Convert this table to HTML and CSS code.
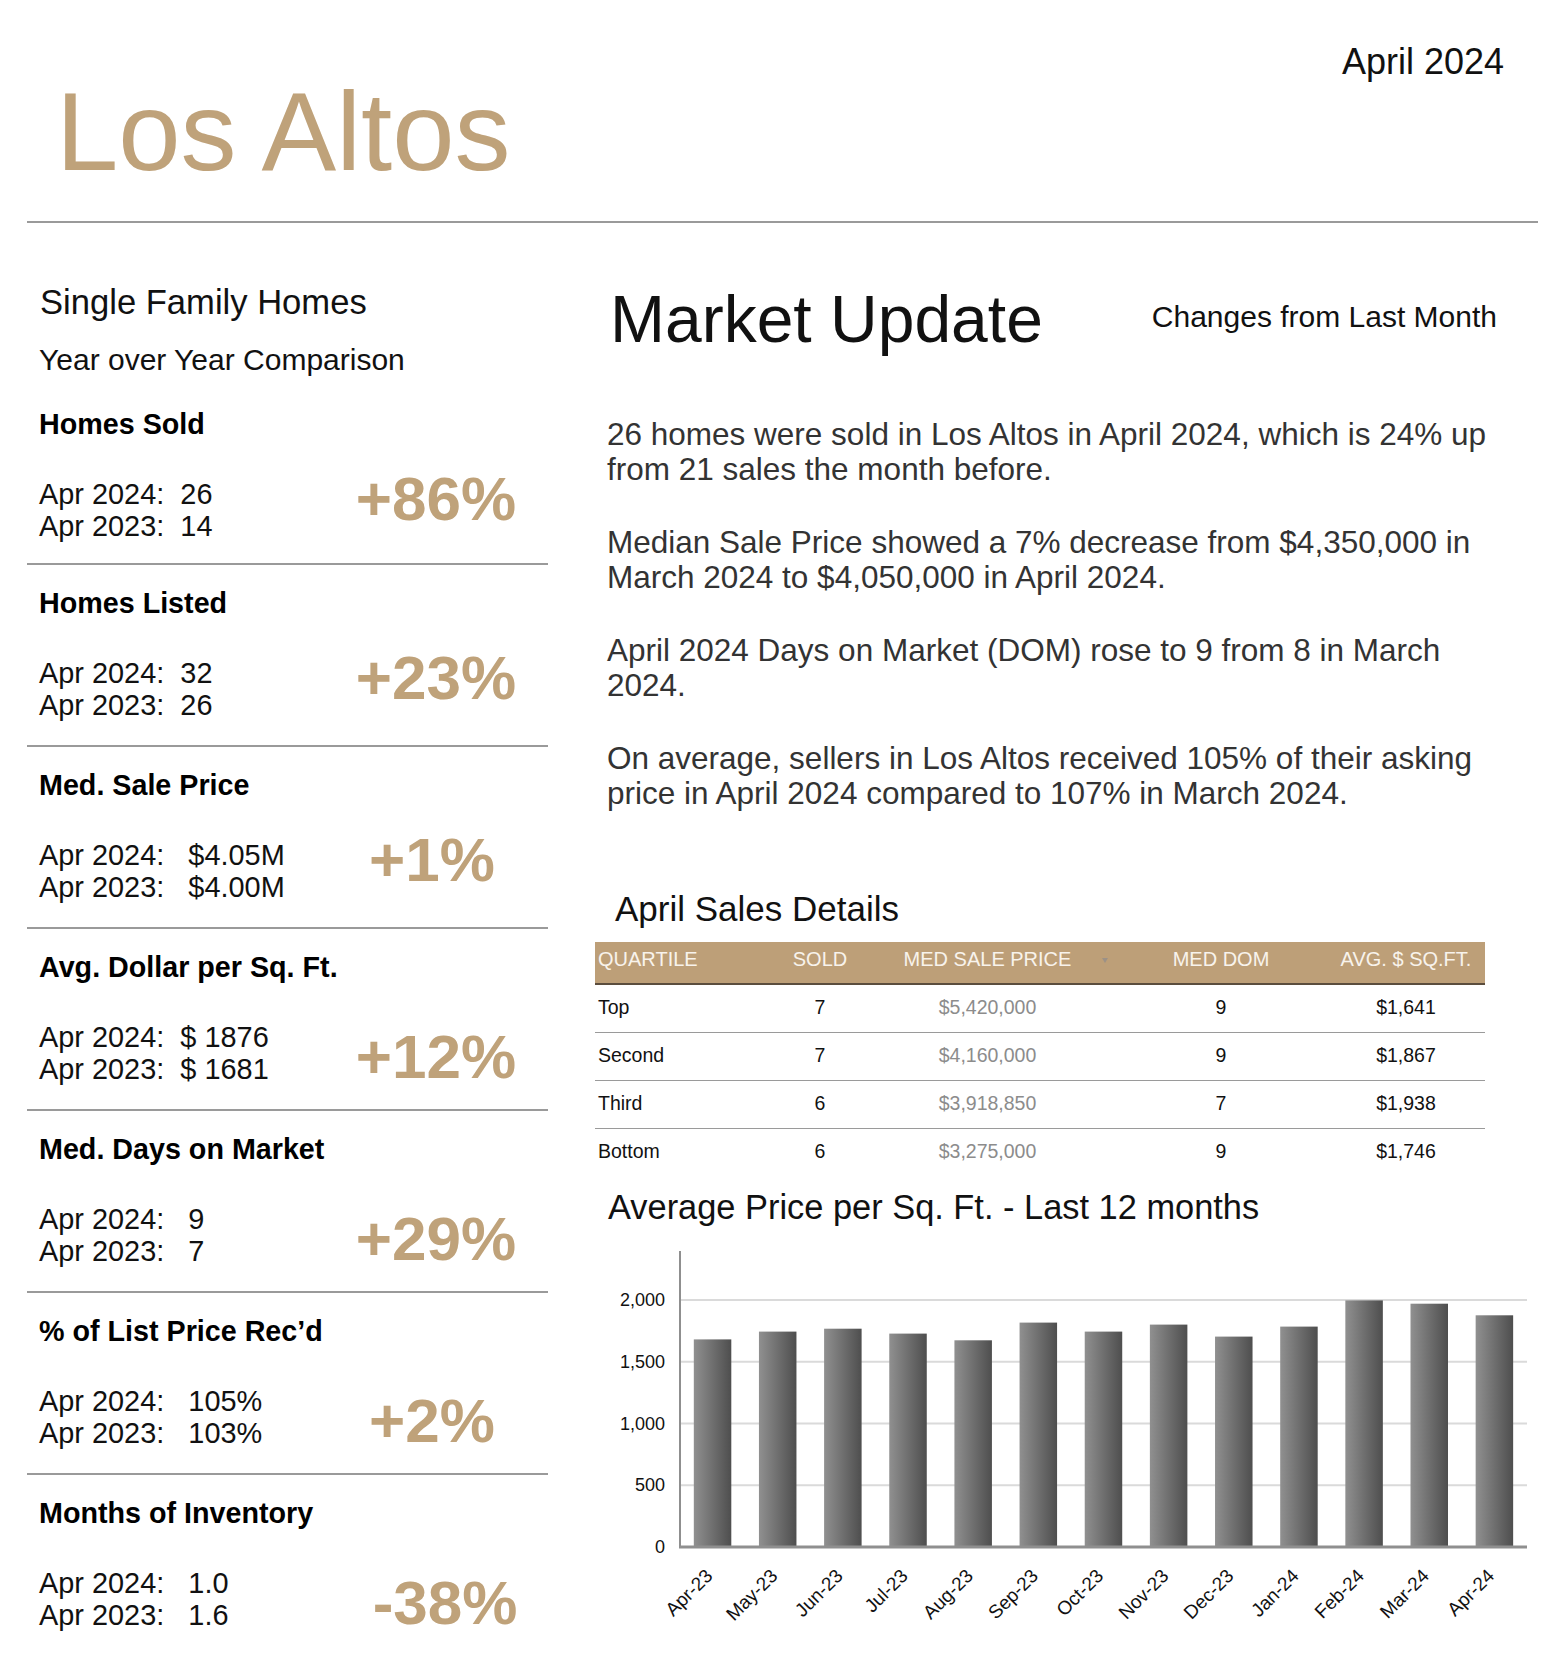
FILE: index.html
```html
<!DOCTYPE html>
<html lang="en">
<head>
<meta charset="utf-8">
<title>Los Altos Market Update – April 2024</title>
<link rel="stylesheet" href="styles.css">
</head>
<body>
<div class="page">
  <header class="masthead">
    <h1 class="city">Los Altos</h1>
    <div class="issue">April 2024</div>
  </header>

  <main class="columns">
    <section class="stats">
      <h2 class="stats-title">Single Family Homes</h2>
      <p class="stats-sub">Year over Year Comparison</p>

      <div class="stat stat--mid">
        <div class="stat-label">Homes Sold</div>
        <div class="stat-values">
          <div class="stat-line">Apr 2024:  26</div>
          <div class="stat-line">Apr 2023:  14</div>
        </div>
        <div class="stat-pct">+86%</div>
      </div>

      <div class="stat stat--mid">
        <div class="stat-label">Homes Listed</div>
        <div class="stat-values">
          <div class="stat-line">Apr 2024:  32</div>
          <div class="stat-line">Apr 2023:  26</div>
        </div>
        <div class="stat-pct">+23%</div>
      </div>

      <div class="stat stat--mid">
        <div class="stat-label">Med. Sale Price</div>
        <div class="stat-values">
          <div class="stat-line">Apr 2024:   $4.05M</div>
          <div class="stat-line">Apr 2023:   $4.00M</div>
        </div>
        <div class="stat-pct stat-pct--short">+1%</div>
      </div>

      <div class="stat">
        <div class="stat-label">Avg. Dollar per Sq. Ft.</div>
        <div class="stat-values">
          <div class="stat-line">Apr 2024:  $ 1876</div>
          <div class="stat-line">Apr 2023:  $ 1681</div>
        </div>
        <div class="stat-pct">+12%</div>
      </div>

      <div class="stat">
        <div class="stat-label">Med. Days on Market</div>
        <div class="stat-values">
          <div class="stat-line">Apr 2024:   9</div>
          <div class="stat-line">Apr 2023:   7</div>
        </div>
        <div class="stat-pct">+29%</div>
      </div>

      <div class="stat">
        <div class="stat-label">% of List Price Rec’d</div>
        <div class="stat-values">
          <div class="stat-line">Apr 2024:   105%</div>
          <div class="stat-line">Apr 2023:   103%</div>
        </div>
        <div class="stat-pct stat-pct--short">+2%</div>
      </div>

      <div class="stat">
        <div class="stat-label">Months of Inventory</div>
        <div class="stat-values">
          <div class="stat-line">Apr 2024:   1.0</div>
          <div class="stat-line">Apr 2023:   1.6</div>
        </div>
        <div class="stat-pct stat-pct--neg">-38%</div>
      </div>
    </section>

    <section class="update">
      <div class="update-head">
        <h2 class="update-title">Market Update</h2>
        <div class="update-note">Changes from Last Month</div>
      </div>

      <div class="update-text">
        <p>26 homes were sold in Los Altos in April 2024, which is 24% up from 21 sales the month before.</p>
        <p>Median Sale Price showed a 7% decrease from $4,350,000 in March 2024 to $4,050,000 in April 2024.</p>
        <p>April 2024 Days on Market (DOM) rose to 9 from 8 in March 2024.</p>
        <p>On average, sellers in Los Altos received 105% of their asking price in April 2024 compared to 107% in March 2024.</p>
      </div>

      <h3 class="details-title">April Sales Details</h3>
      <div class="sales">
        <div class="sales-row sales-head">
          <span class="c-q">QUARTILE</span>
          <span>SOLD</span>
          <span>MED SALE PRICE</span>
          <span class="sort"><i class="sort-caret"></i></span>
          <span>MED DOM</span>
          <span class="c-avg">AVG. $ SQ.FT.</span>
        </div>
        <div class="sales-row sales-item">
          <span class="c-q">Top</span><span>7</span><span class="c-price">$5,420,000</span><span></span><span>9</span><span class="c-avg">$1,641</span>
        </div>
        <div class="sales-row sales-item">
          <span class="c-q">Second</span><span>7</span><span class="c-price">$4,160,000</span><span></span><span>9</span><span class="c-avg">$1,867</span>
        </div>
        <div class="sales-row sales-item">
          <span class="c-q">Third</span><span>6</span><span class="c-price">$3,918,850</span><span></span><span>7</span><span class="c-avg">$1,938</span>
        </div>
        <div class="sales-row sales-item">
          <span class="c-q">Bottom</span><span>6</span><span class="c-price">$3,275,000</span><span></span><span>9</span><span class="c-avg">$1,746</span>
        </div>
      </div>

      <h3 class="chart-title">Average Price per Sq. Ft. - Last 12 months</h3>
      <svg class="chart" width="943" height="440" viewBox="0 0 943 440" xmlns="http://www.w3.org/2000/svg">
        <defs>
          <linearGradient id="barg" x1="0" y1="0" x2="1" y2="0">
            <stop offset="0" stop-color="#909090"/>
            <stop offset="1" stop-color="#4e4e4e"/>
          </linearGradient>
        </defs>
        <g class="grid">
          <line x1="85" y1="71" x2="932" y2="71"/>
          <line x1="85" y1="132.75" x2="932" y2="132.75"/>
          <line x1="85" y1="194.5" x2="932" y2="194.5"/>
          <line x1="85" y1="256.25" x2="932" y2="256.25"/>
        </g>
        <g class="bars" fill="url(#barg)">
          <rect x="98.8" y="110.4" width="37.5" height="207.6"/>
          <rect x="163.95" y="102.6" width="37.5" height="215.4"/>
          <rect x="229.1" y="99.7" width="37.5" height="218.3"/>
          <rect x="294.26" y="104.6" width="37.5" height="213.4"/>
          <rect x="359.42" y="111.3" width="37.5" height="206.7"/>
          <rect x="424.57" y="93.6" width="37.5" height="224.4"/>
          <rect x="489.72" y="102.6" width="37.5" height="215.4"/>
          <rect x="554.88" y="95.6" width="37.5" height="222.4"/>
          <rect x="620.03" y="107.6" width="37.5" height="210.4"/>
          <rect x="685.19" y="97.6" width="37.5" height="220.4"/>
          <rect x="750.34" y="71.4" width="37.5" height="246.6"/>
          <rect x="815.5" y="74.7" width="37.5" height="243.3"/>
          <rect x="880.65" y="86.3" width="37.5" height="231.7"/>
        </g>
        <line class="axis-y" x1="85" y1="22" x2="85" y2="318"/>
        <line class="axis-x" x1="84" y1="318" x2="932" y2="318"/>
        <g class="ylabels">
          <text x="70" y="77">2,000</text>
          <text x="70" y="139">1,500</text>
          <text x="70" y="200.5">1,000</text>
          <text x="70" y="262">500</text>
          <text x="70" y="324">0</text>
        </g>
        <g class="xlabels">
          <text transform="translate(118.6 348) rotate(-45)">Apr-23</text>
          <text transform="translate(183.7 348) rotate(-45)">May-23</text>
          <text transform="translate(248.9 348) rotate(-45)">Jun-23</text>
          <text transform="translate(314 348) rotate(-45)">Jul-23</text>
          <text transform="translate(379.2 348) rotate(-45)">Aug-23</text>
          <text transform="translate(444.3 348) rotate(-45)">Sep-23</text>
          <text transform="translate(509.5 348) rotate(-45)">Oct-23</text>
          <text transform="translate(574.7 348) rotate(-45)">Nov-23</text>
          <text transform="translate(639.8 348) rotate(-45)">Dec-23</text>
          <text transform="translate(705 348) rotate(-45)">Jan-24</text>
          <text transform="translate(770.1 348) rotate(-45)">Feb-24</text>
          <text transform="translate(835.3 348) rotate(-45)">Mar-24</text>
          <text transform="translate(900.4 348) rotate(-45)">Apr-24</text>
        </g>
      </svg>
    </section>
  </main>
</div>
</body>
</html>
```

FILE: styles.css
```css
* {
  box-sizing: border-box;
}

html,
body {
  margin: 0;
  padding: 0;
  background: #ffffff;
}

body {
  font-family: "Liberation Sans", Arial, sans-serif;
  color: #111111;
}

.page {
  width: 1566px;
  padding: 0 28px 0 27px;
}

/* ---------- masthead ---------- */
.masthead {
  display: flex;
  justify-content: space-between;
  align-items: flex-start;
  height: 223px;
  border-bottom: 2px solid #9a9a9a;
}

.city {
  margin: 76px 0 0 29px;
  font-size: 112px;
  line-height: 112px;
  font-weight: 400;
  letter-spacing: 0;
  color: #bfa27a;
}

.issue {
  margin: 44px 34px 0 0;
  font-size: 36px;
  line-height: 36px;
}

/* ---------- two columns ---------- */
.columns {
  display: grid;
  grid-template-columns: 521px 943px;
  column-gap: 47px;
}

/* ---------- left: year over year ---------- */
.stats-title {
  margin: 59px 0 0 13px;
  font-size: 34.6px;
  line-height: 40px;
  font-weight: 400;
}

.stats-sub {
  margin: 20px 0 8px 12px;
  font-size: 30px;
  line-height: 36px;
}

.stat {
  display: grid;
  grid-template-columns: 1fr 192px;
  row-gap: 38px;
  padding: 22px 16px 24px 12px;
  border-bottom: 2px solid #9a9a9a;
}

.stat:first-of-type {
  padding-bottom: 21px;
}

.stat:last-child {
  border-bottom: 0;
}

.stat-label {
  grid-column: 1 / -1;
  font-weight: 700;
  font-size: 28.7px;
  line-height: 32px;
  color: #000000;
}

.stat-values {
  grid-column: 1;
  grid-row: 2;
}

.stat-line {
  font-size: 28.9px;
  line-height: 32px;
  white-space: pre;
}

.stat-pct {
  grid-column: 2;
  grid-row: 2;
  align-self: end;
  text-align: center;
  font-weight: 700;
  font-size: 62px;
  line-height: 56px;
  color: #bfa27a;
}

.stat-pct--short {
  padding-right: 8px;
}

.stat-pct--neg {
  padding-left: 18px;
}

.stat--mid .stat-pct {
  align-self: start;
  margin-top: -7px;
}

/* ---------- right: market update ---------- */
.update {
  padding-top: 60px;
}

.update-head {
  display: flex;
  justify-content: space-between;
  align-items: flex-start;
  padding: 0 41px 0 15px;
}

.update-title {
  margin: 0;
  font-size: 66px;
  line-height: 72px;
  font-weight: 400;
}

.update-note {
  margin-top: 16px;
  font-size: 30px;
  line-height: 36px;
}

.update-text {
  display: flex;
  flex-direction: column;
  gap: 38px;
  width: 910px;
  margin: 62px 0 0 12px;
  color: #333333;
  font-size: 31.5px;
  line-height: 35px;
}

.update-text p {
  margin: 0;
}

.details-title {
  margin: 78px 0 0 20px;
  font-size: 35px;
  line-height: 40px;
  font-weight: 400;
}

/* ---------- sales table ---------- */
.sales {
  width: 890px;
  margin-top: 13px;
}

.sales-row {
  display: grid;
  grid-template-columns: 150px 150px 185px 50px 182px 173px;
  text-align: center;
}

.sales-head {
  padding: 3px 0 10px;
  background: #bd9f78;
  color: #f8f3ec;
  font-size: 20px;
  line-height: 28px;
  border-bottom: 2px solid #5b4d3d;
}

.sales-item {
  padding: 3px 0 6px;
  font-size: 19.5px;
  line-height: 38px;
  color: #111111;
  border-bottom: 1px solid #9a9a9a;
}

.sales-item:last-child {
  border-bottom: 0;
}

.c-q {
  text-align: left;
  padding-left: 3px;
}

.c-avg {
  padding-left: 15px;
}

.c-price {
  color: #8c8c8c;
}

.sort-caret {
  display: inline-block;
  width: 0;
  height: 0;
  border-left: 3px solid transparent;
  border-right: 3px solid transparent;
  border-top: 5px solid #9c9186;
  vertical-align: middle;
}

/* ---------- chart ---------- */
.chart-title {
  margin: 11px 0 0 13px;
  font-size: 34.4px;
  line-height: 40px;
  font-weight: 400;
}

.chart {
  display: block;
  margin-top: 2px;
}

.chart .grid line {
  stroke: #dadada;
  stroke-width: 2;
}

.chart .axis-y {
  stroke: #8f8f8f;
  stroke-width: 2;
}

.chart .axis-x {
  stroke: #8f8f8f;
  stroke-width: 3;
}

.chart text {
  font-family: "Liberation Sans", Arial, sans-serif;
  fill: #111111;
}

.chart .ylabels text {
  font-size: 18px;
  text-anchor: end;
}

.chart .xlabels text {
  font-size: 19px;
  text-anchor: end;
}
```
